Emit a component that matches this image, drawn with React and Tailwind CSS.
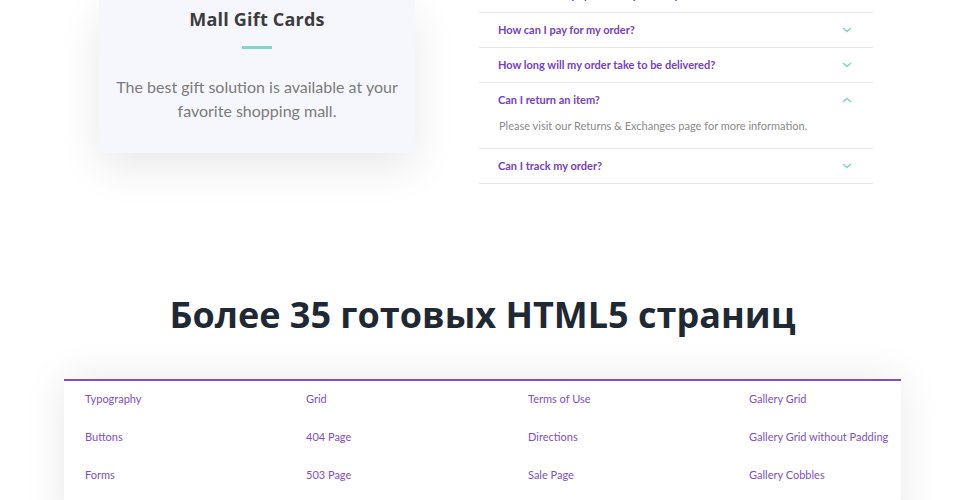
const faqs = [
  { q: "What forms of payment do you accept?", hidden: true },
  { q: "How can I pay for my order?" },
  { q: "How long will my order take to be delivered?" },
  {
    q: "Can I return an item?",
    open: true,
    a: "Please visit our Returns & Exchanges page for more information.",
  },
  { q: "Can I track my order?" },
];

const pages = [
  ["Typography", "Grid", "Terms of Use", "Gallery Grid"],
  ["Buttons", "404 Page", "Directions", "Gallery Grid without Padding"],
  ["Forms", "503 Page", "Sale Page", "Gallery Cobbles"],
  ["Tables", "Coming Soon", "Search Results", "Gallery Masonry"],
];

function Chevron({ up }) {
  return (
    <svg width="10" height="6" viewBox="0 0 10 6" className="shrink-0">
      <path
        d={up ? "M1 5 L5 1.5 L9 5" : "M1 1 L5 4.5 L9 1"}
        fill="none"
        stroke="#7fd6c8"
        strokeWidth="1.6"
      />
    </svg>
  );
}

export default function App() {
  return (
    <div
      className="w-full h-[500px] overflow-hidden bg-white"
      style={{ fontFamily: "Lato, 'Open Sans', sans-serif" }}
    >
      <div className="w-[837px] mx-auto">
        <div className="flex items-start pl-[35px]">
          <div className="w-[316px] bg-[#f6f7fc] pt-[8px] pb-[30px] text-center shadow-[0_14px_40px_rgba(0,0,0,0.09)]">
            <h3 className="text-[18px] leading-[22px] font-bold text-[#3c3c3c] tracking-[0.2px] font-['Open_Sans',sans-serif]">
              Mall Gift Cards
            </h3>
            <div className="mx-auto mt-[16px] w-[30px] h-[3px] bg-[#7fd6c8]" />
            <p className="mt-[26px] px-[16px] text-[16px] leading-[24px] text-[#7b7b7b]">
              The best gift solution is available at your favorite shopping
              mall.
            </p>
          </div>

          <div className="ml-[64px] w-[394px] -mt-[22px]">
            {faqs.map((f) => (
              <div key={f.q} className="border-b border-[#e8e8e8]">
                <div className="h-[34px] flex items-center justify-between pl-[19px] pr-[21px]">
                  <span className="text-[11px] font-bold text-[#7341c2]">
                    {f.q}
                  </span>
                  <Chevron up={f.open} />
                </div>
                {f.open ? (
                  <p className="pl-[20px] mt-[1px] pb-[14px] text-[11px] leading-[16px] text-[#8a8a8a]">
                    {f.a}
                  </p>
                ) : null}
              </div>
            ))}
          </div>
        </div>

        <h2 className="mt-[109px] text-center text-[36px] leading-[44px] font-bold text-[#1f2933] font-['Open_Sans',sans-serif]">
          Более 35 готовых HTML5 страниц
        </h2>

        <div className="mt-[42px] border-t-2 border-[#7e4fc4] bg-white shadow-[0_0_40px_rgba(0,0,0,0.09)]">
          {pages.map((row, i) => (
            <div
              key={i}
              className="grid grid-cols-[221px_222px_221px_1fr] pl-[21px] pb-[2px] h-[38px] items-center"
            >
              {row.map((p) => (
                <a key={p} className="text-[11px] text-[#7e4fc4]">
                  {p}
                </a>
              ))}
            </div>
          ))}
        </div>
      </div>
    </div>
  );
}
